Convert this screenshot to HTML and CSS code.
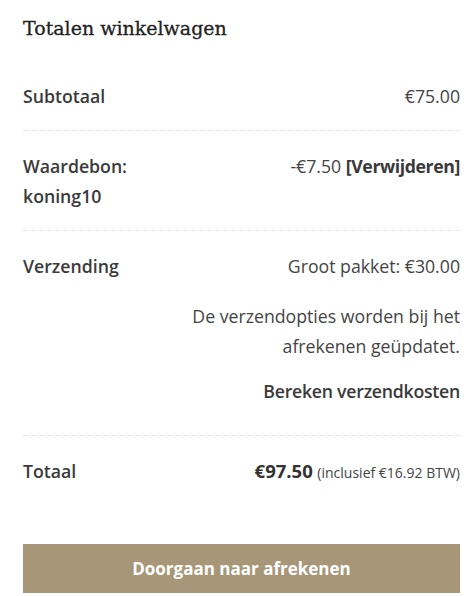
FILE: index.html
```html
<!DOCTYPE html>
<html lang="nl">
<head>
<meta charset="utf-8">
<title>Totalen winkelwagen</title>
<link rel="stylesheet" href="styles.css">
</head>
<body>
<div class="cart-totals">
  <h2 class="title">Totalen winkelwagen</h2>
  <div class="row">
    <div class="label">Subtotaal</div>
    <div class="value">€75.00</div>
  </div>
  <div class="row">
    <div class="label">Waardebon: koning10</div>
    <div class="value">-€7.50 <a class="remove" href="#">[Verwijderen]</a></div>
  </div>
  <div class="row">
    <div class="label">Verzending</div>
    <div class="value">
      <div>Groot pakket: €30.00</div>
      <p class="note">De verzendopties worden bij het afrekenen geüpdatet.</p>
      <a class="calc" href="#">Bereken verzendkosten</a>
    </div>
  </div>
  <div class="row last">
    <div class="label">Totaal</div>
    <div class="value"><strong class="total">€97.50</strong> <small class="tax">(inclusief €16.92 BTW)</small></div>
  </div>
  <a class="checkout" href="#">Doorgaan naar afrekenen</a>
</div>
</body>
</html>
```
FILE: styles.css
```css
html, body {
  margin: 0;
  padding: 0;
  background: #ffffff;
}
body {
  font-family: "Open Sans", "Noto Sans", sans-serif;
  font-size: 17.7px;
  color: #444444;
}
.cart-totals {
  padding: 0 10px 0 23px;
}
.title {
  margin: 0;
  padding-top: 14px;
  font-family: "DejaVu Serif", "Liberation Serif", serif;
  font-size: 19px;
  font-weight: 400;
  line-height: 28px;
  color: #222222;
  margin-bottom: 19px;
  -webkit-text-stroke: 0.3px #222222;
}
.row {
  display: grid;
  grid-template-columns: 35% 1fr;
  padding: 20px 0;
  line-height: 30px;
  background-image: repeating-linear-gradient(to right, #e6e6e6 0 5px, transparent 5px 8px);
  background-size: 100% 1px;
  background-repeat: no-repeat;
  background-position: left bottom;
}
.row.last {
  background-image: none;
}
.label {
  font-weight: 600;
  color: #3a3a3a;
}
.value {
  text-align: right;
}
.remove {
  color: #3a3a3a;
  font-weight: 700;
  letter-spacing: -0.4px;
  text-decoration: none;
}
.note {
  margin: 20px 0 0;
}
.calc {
  display: block;
  margin: 15px 0 10px;
  font-weight: 600;
  letter-spacing: -0.25px;
  color: #3a3a3a;
  text-decoration: none;
}
.total {
  font-weight: 700;
  font-size: 18.5px;
  color: #333333;
}
.tax {
  font-size: 14px;
}
.checkout {
  display: block;
  margin-top: 36px;
  height: 49px;
  line-height: 49px;
  background: #a89678;
  color: #ffffff;
  text-align: center;
  font-weight: 700;
  font-size: 17px;
  text-decoration: none;
}
```
